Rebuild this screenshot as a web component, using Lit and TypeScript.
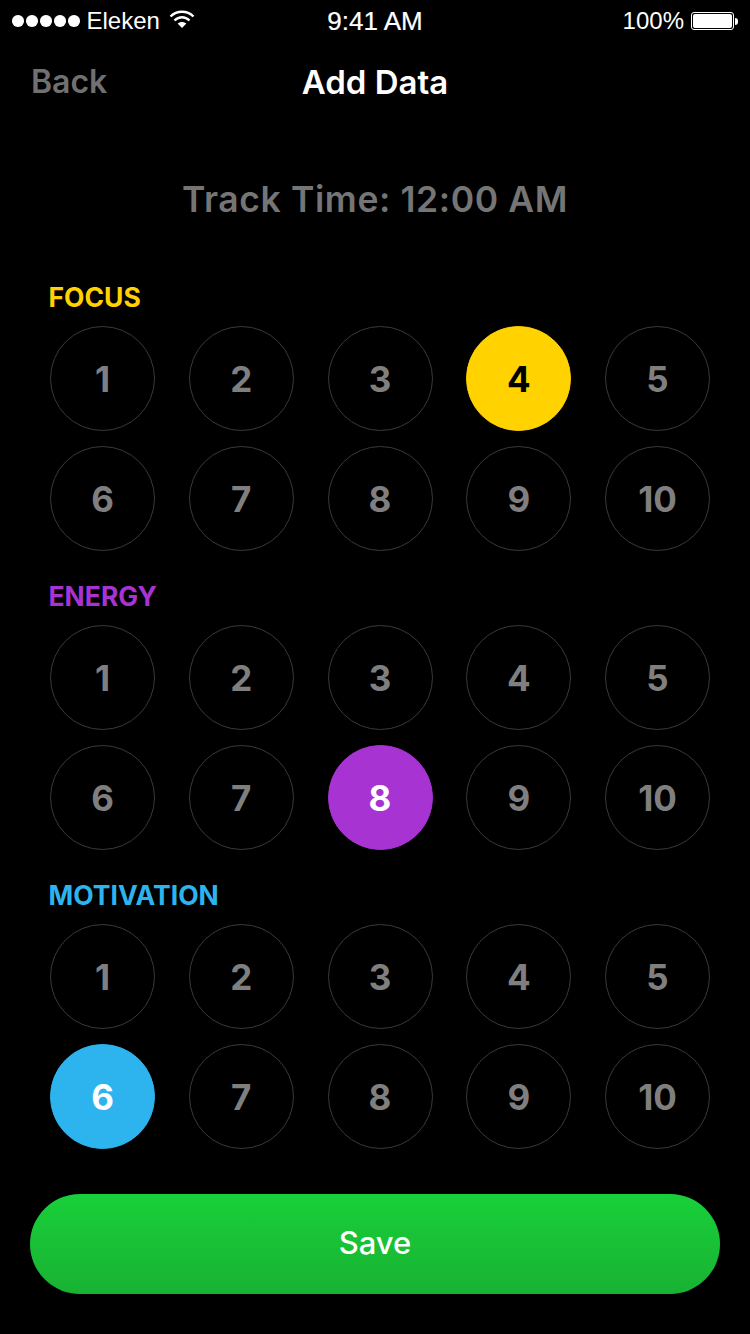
import { LitElement, html, css } from "lit";
import { customElement } from "lit/decorators.js";

const SECTIONS = [
  { name: "FOCUS", cls: "focus", sel: 4 },
  { name: "ENERGY", cls: "energy", sel: 8 },
  { name: "MOTIVATION", cls: "motivation", sel: 6 },
];

@customElement("app-root")
export class AppRoot extends LitElement {
  static styles = css`
    :host {
      display: block;
      width: 750px;
      height: 1334px;
      background: #000;
      color: #fff;
      font-family: Inter, "Liberation Sans", sans-serif;
      overflow: hidden;
    }
    .status {
      height: 42px;
      display: grid;
      grid-template-columns: 1fr auto 1fr;
      align-items: center;
      padding: 0 12px;
      font-family: "Liberation Sans", sans-serif;
      font-size: 24px;
    }
    .left { display: flex; align-items: center; }
    .dots { display: flex; gap: 2.5px; margin-right: 7px; }
    .dots i { width: 11.5px; height: 11.5px; border-radius: 50%; background: #fff; }
    .wifi { margin-left: 9px; width: 26px; height: 20px; margin-top: -4px; }
    .time { font-size: 26px; -webkit-text-stroke: 0.2px #fff; }
    .right { display: flex; align-items: center; justify-content: flex-end; }
    .battery { margin-left: 7px; display: flex; align-items: center; }
    .cell {
      width: 39px;
      height: 14px;
      border: 1px solid #fff;
      border-radius: 3px;
      padding: 1px;
      box-sizing: content-box;
      display: flex;
    }
    .cell b { flex: 1; background: #fff; border-radius: 2px; }
    .cap { width: 3px; height: 7px; background: #fff; border-radius: 0 3px 3px 0; margin-left: 1px; }
    .nav {
      height: 82px;
      position: relative;
      display: flex;
      align-items: center;
      justify-content: center;
    }
    .back {
      position: absolute;
      left: 31px;
      top: 20px;
      font-size: 32px;
      line-height: 40px;
      font-weight: 600;
      color: #707070;
    }
    .title { font-size: 33px; font-weight: 600; line-height: 40px; margin-top: -3px; }
    .track {
      margin-top: 51px;
      height: 50px;
      line-height: 50px;
      text-align: center;
      font-size: 35.5px;
      font-weight: 600;
      letter-spacing: 0.6px;
      color: #757575;
    }
    .sections { padding: 0 40px 0 50px; margin-top: 57px; display: flex; flex-direction: column; gap: 30px; }
    .label { font-size: 26.5px; font-weight: 700; line-height: 30px; height: 30px; margin-bottom: 14px; margin-left: -1.5px; }
    .focus .label { color: #ffd200; }
    .energy .label { color: #a733d3; }
    .motivation .label { color: #2db4ee; }
    .grid {
      display: grid;
      grid-template-columns: repeat(5, 105px);
      justify-content: space-between;
      row-gap: 15px;
    }
    .n {
      width: 105px;
      height: 105px;
      box-sizing: border-box;
      border-radius: 50%;
      border: 1px solid #3a3a3a;
      display: flex;
      align-items: center;
      justify-content: center;
      font-size: 35px;
      font-weight: 700;
      color: #7f7f7f;
    }
    .focus .on { background: #ffd200; border-color: #ffd200; color: #000; }
    .energy .on { background: #a733d3; border-color: #a733d3; color: #fff; }
    .motivation .on { background: #2db4ee; border-color: #2db4ee; color: #fff; }
    .foot { padding: 0 30px; margin-top: 45px; }
    .save {
      height: 96px;
      padding-bottom: 4px;
      border-radius: 50px;
      background: linear-gradient(#18d039, #18b233);
      display: flex;
      align-items: center;
      justify-content: center;
      font-size: 31px;
      font-weight: 500;
    }
  `;

  render() {
    return html`
      <div class="status">
        <div class="left">
          <div class="dots"><i></i><i></i><i></i><i></i><i></i></div>
          <span>Eleken</span>
          <svg class="wifi" viewBox="0 0 26 20">
            <path d="M1.5 7.5C8 1.2 18 1.2 24.5 7.5" fill="none" stroke="#fff" stroke-width="2.4"/>
            <path d="M5.5 11.5C10 7.2 16 7.2 20.5 11.5" fill="none" stroke="#fff" stroke-width="2.4"/>
            <path d="M13 19L8.6 14.6C11 12.4 15 12.4 17.4 14.6Z" fill="#fff"/>
          </svg>
        </div>
        <div class="time">9:41 AM</div>
        <div class="right">
          <span>100%</span>
          <div class="battery"><div class="cell"><b></b></div><div class="cap"></div></div>
        </div>
      </div>
      <div class="nav">
        <div class="back">Back</div>
        <div class="title">Add Data</div>
      </div>
      <div class="track">Track Time: 12:00 AM</div>
      <div class="sections">
        ${SECTIONS.map(
          (s) => html`
            <section class=${s.cls}>
              <div class="label">${s.name}</div>
              <div class="grid">
                ${[1, 2, 3, 4, 5, 6, 7, 8, 9, 10].map(
                  (n) => html`<div class="n ${n === s.sel ? "on" : ""}">${n}</div>`
                )}
              </div>
            </section>
          `
        )}
      </div>
      <div class="foot"><div class="save">Save</div></div>
    `;
  }
}
